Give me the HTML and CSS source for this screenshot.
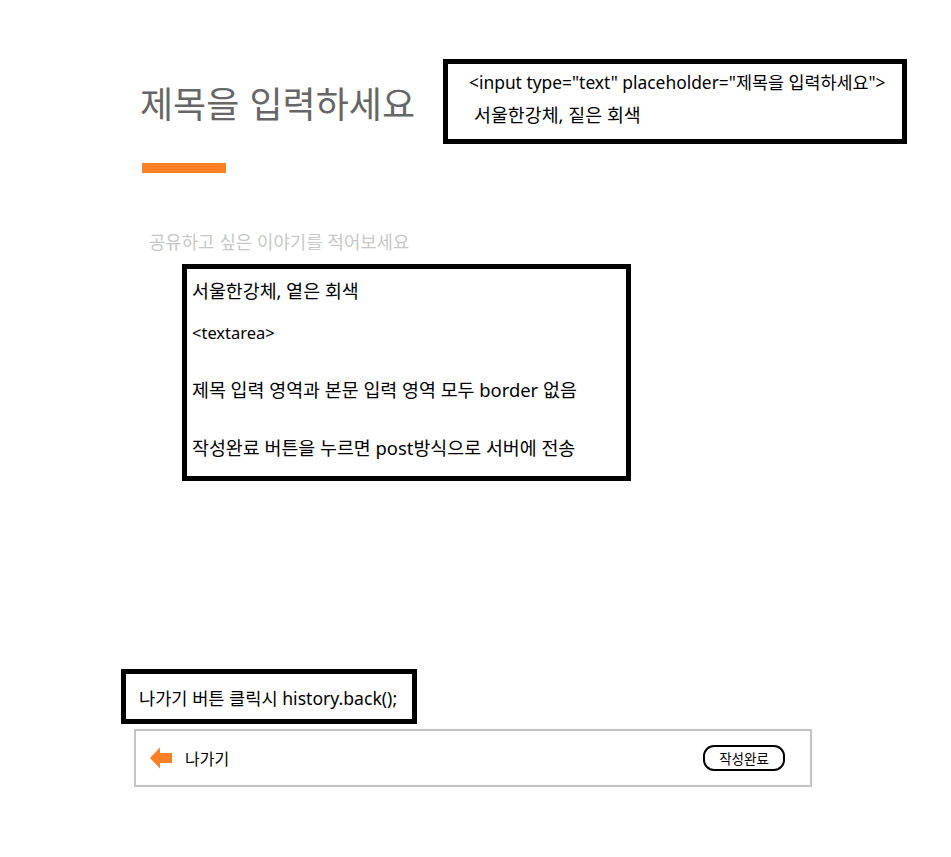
FILE: index.html
```html
<!DOCTYPE html>
<html lang="ko">
<head>
<meta charset="utf-8">
<title>글쓰기</title>
<link rel="stylesheet" href="styles.css">
</head>
<body>
<div class="page">
  <form class="write-form" method="post">
    <input class="title-input" type="text" placeholder="제목을 입력하세요">
    <div class="title-bar"></div>
    <textarea class="body-input" placeholder="공유하고 싶은 이야기를 적어보세요"></textarea>
    <div class="bottom-bar">
      <button type="button" class="back-btn">
        <svg class="back-icon" width="22" height="22" viewBox="0 0 22 22">
          <path d="M0 11 L10 0.5 L10 6 L22 6 L22 16 L10 16 L10 21.5 Z" fill="#ff7f27"/>
        </svg>
        <span>나가기</span>
      </button>
      <button type="submit" class="submit-btn">작성완료</button>
    </div>
  </form>

  <div class="note note-title">
    <p class="note-code">&lt;input type="text" placeholder="제목을 입력하세요"&gt;</p>
    <p class="note-indent">서울한강체, 짙은 회색</p>
  </div>

  <div class="note note-body">
    <p>서울한강체, 옅은 회색</p>
    <p class="note-small">&lt;textarea&gt;</p>
    <p class="note-gap3">제목 입력 영역과 본문 입력 영역 모두 border 없음</p>
    <p class="note-gap4">작성완료 버튼을 누르면 post방식으로 서버에 전송</p>
  </div>

  <div class="note note-back">
    <p>나가기 버튼 클릭시 history.back();</p>
  </div>
</div>
</body>
</html>
```
FILE: styles.css
```css
* { box-sizing: border-box; }
html, body { margin: 0; padding: 0; background: #fff; }
body {
  font-family: "Noto Sans", "Noto Sans CJK KR", sans-serif;
  color: #000;
}
.page {
  position: relative;
  width: 951px;
  height: 857px;
}
.write-form {
  display: flex;
  flex-direction: column;
  padding: 78px 0 0 134px;
}
.title-input {
  border: none;
  outline: none;
  padding: 0;
  margin-left: 6px;
  width: 300px;
  height: 48px;
  font-family: "Noto Sans CJK KR", sans-serif;
  font-size: 36px;
  color: #666;
}
.title-input::placeholder { color: #666; }
.title-bar {
  margin: 37px 0 0 8px;
  width: 84px;
  height: 10px;
  background: #ff7f27;
}
.body-input {
  border: none;
  outline: none;
  resize: none;
  padding: 0;
  margin: 56px 0 0 15px;
  width: 600px;
  height: 500px;
  font-family: "Noto Sans CJK KR", sans-serif;
  font-size: 17.8px;
  line-height: 24px;
  color: #c8c8c8;
}
.body-input::placeholder { color: #c8c8c8; }
.bottom-bar {
  display: flex;
  align-items: center;
  justify-content: space-between;
  width: 678px;
  height: 58px;
  border: 2px solid #c3c3c3;
  padding: 0 25px 0 14px;
}
.back-btn {
  display: flex;
  align-items: center;
  gap: 13px;
  border: none;
  background: none;
  padding: 0;
  font-family: "Noto Sans CJK KR", sans-serif;
  font-size: 16px;
  color: #000;
}
.back-icon { display: block; }
.submit-btn {
  width: 82px;
  height: 26px;
  border: 2px solid #000;
  border-radius: 11px;
  background: #fff;
  padding: 0;
  font-family: "Noto Sans CJK KR", sans-serif;
  font-size: 13.5px;
  color: #000;
}
.note {
  position: absolute;
  background: #fff;
  border: 5px solid #000;
}
.note p { margin: 0; font-size: 18.4px; line-height: 24px; white-space: nowrap; }
.note-title {
  left: 443px; top: 59px; width: 464px; height: 85px;
  padding: 6px 0 0 21px;
}
.note-title .note-code { font-size: 17.4px; }
.note-title .note-indent { margin-top: 9px; padding-left: 5px; }
.note-body {
  left: 182px; top: 264px; width: 449px; height: 217px;
  padding: 10px 0 0 5px;
}
.note-body .note-small { font-size: 16.5px; margin-top: 18px; }
.note-body .note-gap3 { margin-top: 33px; }
.note-body .note-gap4 { margin-top: 34px; }
.note-back {
  left: 121px; top: 669px; width: 296px; height: 55px;
  padding: 12px 0 0 13px;
}
.note-back p { font-size: 17.6px; }
```
